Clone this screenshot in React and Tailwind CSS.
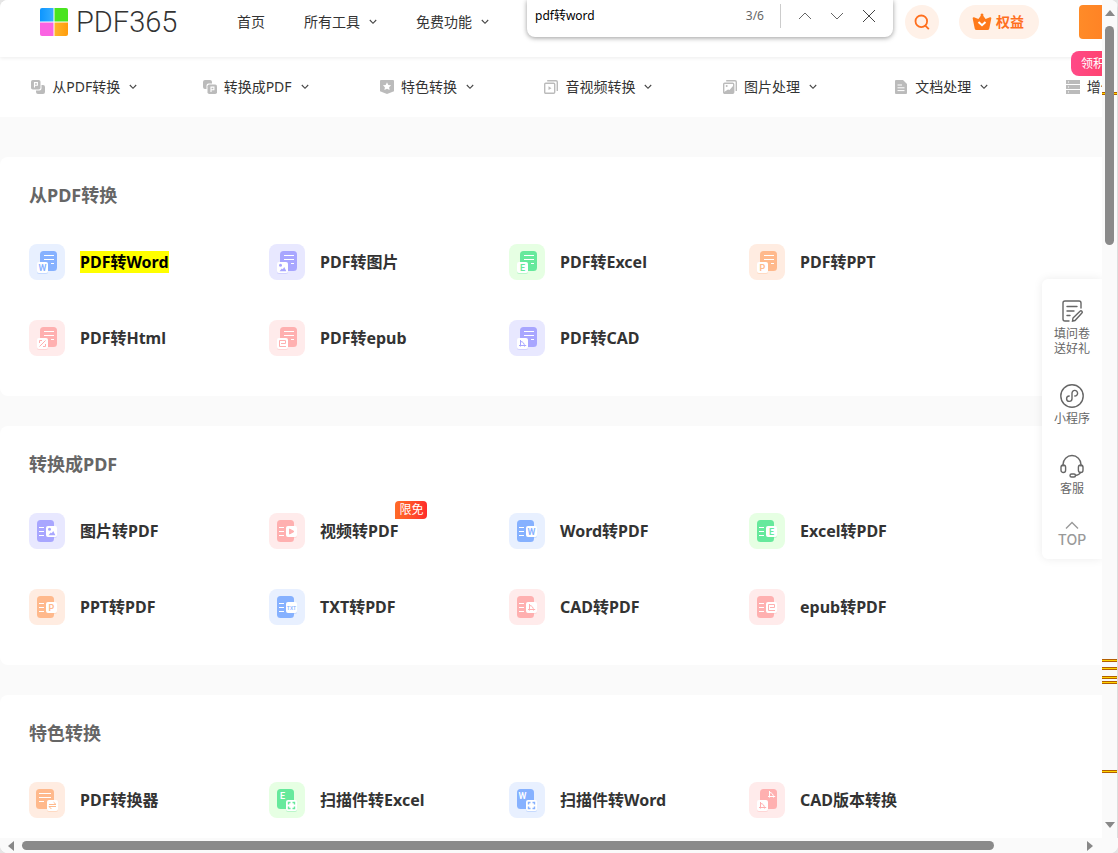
import React, { useState } from "react";

const COLORS = {
  blue: { tile: "#e8f0ff", main: "#86b1ff" },
  purple: { tile: "#e8e8ff", main: "#a8a6ff" },
  green: { tile: "#e6ffe3", main: "#66e99c" },
  orange: { tile: "#ffece1", main: "#ffb98c" },
  red: { tile: "#ffebeb", main: "#ffb0b0" },
};

const SECTIONS = [
  {
    title: "从PDF转换",
    tools: [
      { name: "PDF转Word", color: "blue", layout: "from", glyph: "W", found: true },
      { name: "PDF转图片", color: "purple", layout: "from", glyph: "image" },
      { name: "PDF转Excel", color: "green", layout: "from", glyph: "E" },
      { name: "PDF转PPT", color: "orange", layout: "from", glyph: "P" },
      { name: "PDF转Html", color: "red", layout: "from", glyph: "html" },
      { name: "PDF转epub", color: "red", layout: "from", glyph: "epub" },
      { name: "PDF转CAD", color: "purple", layout: "from", glyph: "cad" },
    ],
  },
  {
    title: "转换成PDF",
    tools: [
      { name: "图片转PDF", color: "purple", layout: "to", glyph: "image" },
      { name: "视频转PDF", color: "red", layout: "to", glyph: "play", tag: "限免" },
      { name: "Word转PDF", color: "blue", layout: "to", glyph: "W" },
      { name: "Excel转PDF", color: "green", layout: "to", glyph: "E" },
      { name: "PPT转PDF", color: "orange", layout: "to", glyph: "P" },
      { name: "TXT转PDF", color: "blue", layout: "to", glyph: "TXT" },
      { name: "CAD转PDF", color: "red", layout: "to", glyph: "cad" },
      { name: "epub转PDF", color: "red", layout: "to", glyph: "epub" },
    ],
  },
  {
    title: "特色转换",
    tools: [
      { name: "PDF转换器", color: "orange", layout: "swap", glyph: "swap" },
      { name: "扫描件转Excel", color: "green", layout: "scan", glyph: "scan", source: "E" },
      { name: "扫描件转Word", color: "blue", layout: "scan", glyph: "scan", source: "W" },
      { name: "CAD版本转换", color: "red", layout: "version", glyph: "cad", source: "cad" },
    ],
  },
];

const CATEGORIES = [
  { name: "从PDF转换", icon: "fromPdf" },
  { name: "转换成PDF", icon: "toPdf" },
  { name: "特色转换", icon: "star" },
  { name: "音视频转换", icon: "media" },
  { name: "图片处理", icon: "picture" },
  { name: "文档处理", icon: "doc" },
  { name: "增值服务", icon: "more" },
];

// Document body, its lines and the badge position, in the 36px tile
const LAYOUTS = {
  from: { doc: [11, 7, 17, 20], lines: "M15 11.5H25M15 15.5H25M22 19.5H25", badge: [8, 18] },
  to: { doc: [8, 7, 17, 22], lines: "M10 14.5H15M10 18.5H15M10 22.5H15", badge: [17, 13] },
  swap: { doc: [7, 7, 18, 20], lines: "M10 11.5H22M10 15.5H22M10 19.5H15", badge: [18, 18] },
  scan: { doc: [8, 7, 17, 20], source: [8, 8], badge: [17, 18] },
  version: { doc: [11, 7, 17, 20], source: [17, 7], badge: [8, 18] },
};

// Small mark in an 11x11 box
function Glyph({ type, color }) {
  switch (type) {
    case "image":
      return (
        <g fill={color}>
          <circle cx="3.5" cy="3.3" r="1.5" />
          <path d="M2.5 9.2L4.8 6.6L5.8 7.2L7.2 5L9.4 9.2Z" />
        </g>
      );
    case "html":
      return <path d="M2.5 5V2.5H5M8.5 2.5L2.5 8.5M6 8.5H8.5V6" fill="none" stroke={color} />;
    case "epub":
      return <path d="M4 5.5H8.5V2.5H2.5V8.5H9" fill="none" stroke={color} />;
    case "cad":
      return (
        <path d="M3.5 2V8.5M2 7.5H9.2M3.5 3.5C6 3.5 7.5 5.5 7.5 8.5" fill="none" stroke={color} />
      );
    case "play":
      return <path d="M3.5 3L8 5.5L3.5 8Z" fill={color} stroke={color} strokeLinejoin="round" />;
    case "swap":
      return (
        <path d="M2 4.5H9L6.6 2.2M9 6.5H2L4.4 9" fill="none" stroke={color} />
      );
    case "scan":
      return (
        <path
          d="M2.5 4.5V2.5H4.5M6.5 2.5H8.5V4.5M8.5 6.5V8.5H6.5M4.5 8.5H2.5V6.5"
          fill="none"
          stroke={color}
          strokeWidth="1.4"
        />
      );
    default:
      return (
        <text
          x="5.5"
          y={type.length > 1 ? 7.5 : 8.5}
          textAnchor="middle"
          fontFamily="Roboto, sans-serif"
          fontWeight={type.length > 1 ? 500 : 600}
          fontSize={type.length > 1 ? 5 : 9}
          fill={color}
        >
          {type}
        </text>
      );
  }
}

function ToolIcon({ color, layout, glyph, source }) {
  const { tile, main } = COLORS[color];
  const { doc, lines, badge, source: sourcePos } = LAYOUTS[layout];
  return (
    <svg viewBox="0 0 36 36" className="size-9 shrink-0" aria-hidden="true">
      <rect width="36" height="36" rx="8" fill={tile} />
      <rect x={doc[0]} y={doc[1]} width={doc[2]} height={doc[3]} rx="3.5" fill={main} />
      {lines && <path d={lines} stroke="#fff" />}
      {source && (
        <g transform={`translate(${sourcePos[0]} ${sourcePos[1]})`}>
          <Glyph type={source} color="#fff" />
        </g>
      )}
      <g transform={`translate(${badge[0]} ${badge[1]})`}>
        <rect y="1" width="11" height="11" rx="2" fill={main} opacity="0.35" />
        <rect width="11" height="11" rx="2" fill="#fff" />
        <Glyph type={glyph} color={main} />
      </g>
    </svg>
  );
}

function CategoryIcon({ type }) {
  return (
    <svg viewBox="0 0 14 14" className="size-[14px] shrink-0" fill="#bbb" aria-hidden="true">
      {type === "fromPdf" && (
        <>
          <path d="M10.5 5H12a2 2 0 0 1 2 2v5a2 2 0 0 1-2 2H7a2 2 0 0 1-2-2v-1.5h3.5a2 2 0 0 0 2-2z" />
          <rect width="9.5" height="9.5" rx="1.8" />
          <path d="M3.5 7.5V2.6H6.4V5.2H3.5" fill="none" stroke="#fff" strokeWidth="1.1" />
        </>
      )}
      {type === "toPdf" && (
        <>
          <path d="M2 0H7a2 2 0 0 1 2 2V3.5H5.5a2 2 0 0 0-2 2V9H2A2 2 0 0 1 0 7V2a2 2 0 0 1 2-2z" />
          <rect x="4.5" y="4.5" width="9.5" height="9.5" rx="1.8" />
          <path d="M8 12V7.1H10.9V9.7H8" fill="none" stroke="#fff" strokeWidth="1.1" />
        </>
      )}
      {type === "star" && (
        <>
          <path d="M1 0H13a1 1 0 0 1 1 1V11.2L7 14L0 11.2V1a1 1 0 0 1 1-1z" />
          <path d="M7 2.3l1.3 2.6 2.8.4-2 2 .5 2.8L7 8.8 4.4 10.1l.5-2.8-2-2 2.8-.4z" fill="#fff" />
        </>
      )}
      {type === "media" && (
        <g fill="none" stroke="#bbb" strokeWidth="1.4">
          <path d="M3.2 .8H12a1.3 1.3 0 0 1 1.3 1.3V11" />
          <rect x=".7" y="3.2" width="10" height="10" rx="1" />
          <path d="M4.5 6.3L7.5 8.2L4.5 10.1Z" fill="#bbb" stroke="none" />
        </g>
      )}
      {type === "picture" && (
        <g fill="none" stroke="#bbb" strokeWidth="1.4">
          <path d="M3.2 .8H12a1.3 1.3 0 0 1 1.3 1.3V11" />
          <rect x=".7" y="3.2" width="10" height="10" rx="1" />
          <circle cx="3.7" cy="6" r="1" fill="#bbb" stroke="none" />
          <path d="M1 12L5 9.5L6.5 10L10 6V13H1Z" fill="#bbb" stroke="none" />
        </g>
      )}
      {type === "doc" && (
        <>
          <path d="M2 0H9L13 4V13a1 1 0 0 1-1 1H2a1 1 0 0 1-1-1V1a1 1 0 0 1 1-1z" />
          <path d="M3.5 5H8M3.5 7.8H10.5M3.5 10.6H10.5" stroke="#fff" />
        </>
      )}
      {type === "more" && (
        <>
          <path d="M0 0H14V4H0zM0 5H14V9H0zM0 10H14V14H0z" />
          <path d="M2 2H3M2 7H3M2 12H3" stroke="#fff" />
        </>
      )}
    </svg>
  );
}

function Chevron() {
  return (
    <svg viewBox="0 0 8 6" className="w-2 h-[6px] shrink-0" fill="none" stroke="#444" aria-hidden="true">
      <path d="M.8 1L4 4.3L7.2 1" strokeWidth="1.1" />
    </svg>
  );
}

function Header() {
  return (
    <header className="relative z-10 flex items-center h-[57px] pb-[13px] pl-10 pr-10 bg-white shadow-[0_1px_4px_rgba(0,0,0,0.08)]">
      <a href="#" className="flex items-center gap-2 w-[197px]" aria-label="PDF365">
        <svg viewBox="0 0 28 28" className="size-7" aria-hidden="true">
          <defs>
            <linearGradient id="logoBlue" x1="0" x2="1">
              <stop stopColor="#0d96ff" />
              <stop offset="1" stopColor="#35adff" />
            </linearGradient>
            <linearGradient id="logoOrange" x1="0" x2="1">
              <stop stopColor="#ffb52b" />
              <stop offset="1" stopColor="#ff9c0c" />
            </linearGradient>
          </defs>
          <path d="M2 0H13.5V13.5H0V2a2 2 0 0 1 2-2z" fill="url(#logoBlue)" />
          <path d="M14.5 0H26a2 2 0 0 1 2 2V13.5H14.5z" fill="#49e420" />
          <path d="M0 14.5H13.5V28H2a2 2 0 0 1-2-2z" fill="#fa63e2" />
          <path d="M14.5 14.5H28V26a2 2 0 0 1-2 2H14.5z" fill="url(#logoOrange)" />
        </svg>
        <span className="font-['Roboto',sans-serif] font-light text-[29px] leading-8 text-[#333]">PDF365</span>
      </a>
      <nav className="flex items-center gap-[39px] text-sm text-[#333]">
        <a href="#">首页</a>
        <button className="flex items-center gap-[9px]">
          所有工具
          <Chevron />
        </button>
        <button className="flex items-center gap-[9px]">
          免费功能
          <Chevron />
        </button>
      </nav>
      <button
        className="ml-auto flex items-center justify-center size-[34px] rounded-full bg-[#fff1e8]"
        aria-label="搜索"
      >
        <svg viewBox="0 0 16 16" className="size-4" fill="none" stroke="#ff6f1e" strokeWidth="1.8" aria-hidden="true">
          <circle cx="7.3" cy="7.3" r="5.8" />
          <path d="M10.8 11.2L14.8 15.2" />
        </svg>
      </button>
      <button className="ml-5 flex items-center justify-center gap-1 w-20 h-[34px] pr-[2px] rounded-full bg-[#fff1e8] text-sm font-bold text-[#ff6f1e]">
        <svg viewBox="0 0 20 18" className="w-5 h-[18px]" aria-hidden="true">
          <path
            d="M10 0.5a1.5 1.5 0 0 1 1.2 2.3L13.6 6L18 4.2a1 1 0 0 1 1.3 1.2L17.3 15.4a2 2 0 0 1-2 1.6H4.7a2 2 0 0 1-2-1.6L.7 5.4A1 1 0 0 1 2 4.2L6.4 6L8.8 2.8A1.5 1.5 0 0 1 10 .5z"
            fill="#ff7a1a"
          />
          <path d="M6.5 9L10 12.2L13.5 9" fill="none" stroke="#fff" strokeWidth="2" />
        </svg>
        权益
      </button>
      <div className="relative ml-10">
        <button className="block w-[81px] h-[34px] rounded bg-linear-to-r from-[#ff8b28] to-[#ff6f1e]" aria-label="登录" />
        <span className="absolute -left-2 top-[46px] h-[25px] px-[10px] rounded-lg bg-linear-to-r from-[#ff4a88] to-[#ff3b5c] text-xs leading-[25px] text-white whitespace-nowrap">
          领积分
        </span>
      </div>
    </header>
  );
}

function Categories() {
  return (
    <nav className="grid grid-cols-7 h-[60px] bg-white text-sm text-[#333]">
      {CATEGORIES.map((item) => (
        <button key={item.name} className="flex items-center justify-center pr-[3px]">
          <CategoryIcon type={item.icon} />
          <span className="ml-[7px] mr-[9px]">{item.name}</span>
          <Chevron />
        </button>
      ))}
    </nav>
  );
}

function Section({ title, tools }) {
  return (
    <section className="rounded-lg bg-white pt-6 pb-10 pl-[29px]">
      <h2 className="mb-[35px] text-lg leading-7 font-bold text-[#666]">{title}</h2>
      <div className="grid grid-cols-[repeat(4,240px)] gap-y-10">
        {tools.map((tool) => (
          <a key={tool.name} href="#" className="flex items-center gap-[15px] font-bold text-[#333]">
            <ToolIcon {...tool} />
            <span className="relative leading-6">
              {tool.found ? <mark className="bg-[#ffff00] text-black">{tool.name}</mark> : tool.name}
              {tool.tag && (
                <span className="absolute left-full bottom-full -ml-[3px] w-8 h-[18px] rounded rounded-bl-none bg-linear-to-r from-[#ff6a28] to-[#ff2a2a] text-center text-xs leading-[18px] font-normal text-white">
                  {tool.tag}
                </span>
              )}
            </span>
          </a>
        ))}
      </div>
    </section>
  );
}

function FindBar() {
  const [term, setTerm] = useState("pdf转word");
  return (
    <div className="absolute z-20 top-0 right-[209px] flex items-center w-[366px] h-[37px] pb-[5px] pl-2 pr-2 rounded-b-lg bg-white shadow-[0_1px_5px_rgba(0,0,0,0.4)]">
      <input
        type="text"
        value={term}
        onChange={(e) => setTerm(e.target.value)}
        className="flex-1 min-w-0 text-xs text-black outline-none"
        aria-label="在页面上查找"
      />
      <span className="mr-4 text-xs text-[#666]">3/6</span>
      <div className="flex items-center h-6 border-l border-[#ccc] pl-2">
        <button className="flex items-center justify-center size-8" aria-label="上一个">
          <svg viewBox="0 0 14 8" className="w-[14px] h-2" fill="none" stroke="#666" aria-hidden="true">
            <path d="M1 7L7 1L13 7" />
          </svg>
        </button>
        <button className="flex items-center justify-center size-8" aria-label="下一个">
          <svg viewBox="0 0 14 8" className="w-[14px] h-2" fill="none" stroke="#666" aria-hidden="true">
            <path d="M1 1L7 7L13 1" />
          </svg>
        </button>
        <button className="flex items-center justify-center size-8" aria-label="关闭">
          <svg viewBox="0 0 14 14" className="size-[14px]" fill="none" stroke="#444" aria-hidden="true">
            <path d="M1 1L13 13M13 1L1 13" />
          </svg>
        </button>
      </div>
    </div>
  );
}

function SideItem({ label, children }) {
  return (
    <button className="flex flex-col items-center">
      <svg viewBox="0 0 24 24" className="size-6" fill="none" stroke="#666" strokeWidth="1.4" strokeLinecap="round" aria-hidden="true">
        {children}
      </svg>
      <span className="mt-[3px] w-9 text-center">{label}</span>
    </button>
  );
}

function SideBar() {
  return (
    <aside className="absolute z-10 right-0 top-[279px] w-[60px] pt-5 pb-3 rounded-l-md bg-white shadow-[0_0_10px_rgba(0,0,0,0.08)] text-xs leading-[15px] text-[#666]">
      <div className="flex flex-col items-center gap-7">
        <SideItem label="填问卷送好礼">
          <path d="M9 22H5a2 2 0 0 1-2-2V4a2 2 0 0 1 2-2H19a2 2 0 0 1 2 2V9" />
          <path d="M7 7.5H17M7 12H14M7 16.5H10" />
          <path d="M13 19L20 12.2a1.3 1.3 0 0 1 1.9 1.9L15 21.5L12.5 22z" />
        </SideItem>
        <SideItem label="小程序">
          <circle cx="12" cy="12" r="11.2" />
          <path d="M9.2 12a2.7 2.7 0 1 0 2.8 2.8V9.3a2.8 2.8 0 1 1 2.8 2.7" />
        </SideItem>
        <SideItem label="客服">
          <path d="M3 12V10.5a9 9 0 0 1 18 0V12" />
          <rect x="1" y="11" width="4.6" height="7.5" rx="2.3" />
          <rect x="18.4" y="11" width="4.6" height="7.5" rx="2.3" />
          <path d="M20.5 18.5C19.5 20.5 17.5 21.3 15.5 21.5" />
          <rect x="10" y="20" width="5.5" height="3" rx="1.5" />
        </SideItem>
      </div>
      <button className="mt-6 flex flex-col items-center w-full text-[#999]">
        <svg viewBox="0 0 14 12" className="w-[14px] h-3" fill="none" stroke="#999" strokeWidth="1.4" aria-hidden="true">
          <path d="M1 8.5L7 2.5L13 8.5" />
        </svg>
        <span className="font-['Inter',sans-serif] text-sm leading-[15px] font-medium">TOP</span>
      </button>
    </aside>
  );
}

function Match() {
  return <i className="block h-[3px] border-y border-[#b35f00] bg-[#ffd400]" />;
}

function VerticalScroll() {
  return (
    <div className="relative flex flex-col items-center w-4 pt-[10px] pb-[10px] bg-[#fafafa] border-r border-[#ddd]">
      <svg viewBox="0 0 10 6" className="w-[10px] h-[6px]" fill="#888" aria-hidden="true">
        <path d="M5 0L10 6H0z" />
      </svg>
      {/* search hits on the track */}
      <div className="absolute inset-x-0 top-[92px] bottom-0 flex flex-col">
        <Match />
        <div className="mt-[564px] flex flex-col gap-[5px]">
          <Match />
          <Match />
        </div>
        <div className="mt-[6px] flex flex-col gap-[2px]">
          <Match />
          <Match />
        </div>
        <div className="mt-[86px]">
          <Match />
        </div>
      </div>
      <div className="relative mt-[10px] w-[9px] h-[219px] rounded-full bg-[#8a8a8a]" />
      <svg viewBox="0 0 10 6" className="mt-auto w-[10px] h-[6px]" fill="#888" aria-hidden="true">
        <path d="M0 0H10L5 6z" />
      </svg>
    </div>
  );
}

function HorizontalScroll() {
  return (
    <div className="flex items-center h-[15px] pl-2 pr-[25px] bg-[#fafafa]">
      <svg viewBox="0 0 6 10" className="w-[6px] h-[10px]" fill="#888" aria-hidden="true">
        <path d="M6 0V10L0 5z" />
      </svg>
      <div className="flex-1 ml-2 mr-[93px] h-[9px] rounded-full bg-[#8a8a8a]" />
      <svg viewBox="0 0 6 10" className="w-[6px] h-[10px]" fill="#888" aria-hidden="true">
        <path d="M0 0L6 5L0 10z" />
      </svg>
    </div>
  );
}

function App() {
  return (
    <div className="h-screen bg-[#e5e5e5] font-['Noto_Sans','Noto_Sans_CJK_SC',sans-serif]">
      <div className="flex flex-col h-full rounded-lg overflow-hidden bg-white">
        <div className="flex flex-1 min-h-0">
          <div className="relative flex-1 min-w-0 overflow-hidden bg-[#fafafa]">
            <FindBar />
            <div className="min-w-[1200px]">
              <Header />
              <Categories />
              <main className="flex flex-col gap-[30px] pt-10">
                {SECTIONS.map((section) => (
                  <Section key={section.title} {...section} />
                ))}
              </main>
            </div>
            <SideBar />
          </div>
          <VerticalScroll />
        </div>
        <HorizontalScroll />
      </div>
    </div>
  );
}

export default App;
